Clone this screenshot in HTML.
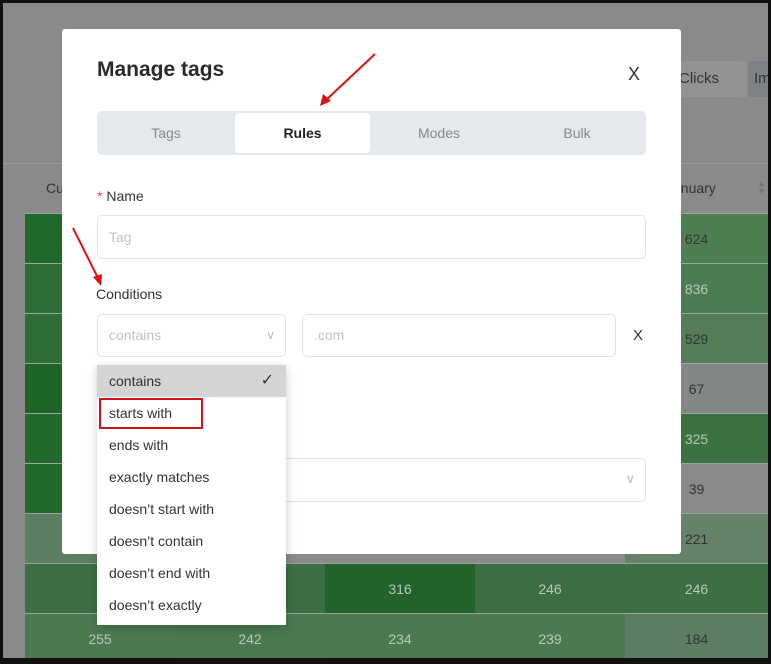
<!DOCTYPE html>
<html><head><style>
*{margin:0;padding:0;box-sizing:border-box}
body{width:771px;height:660px;overflow:hidden;background:#111;font-family:"Liberation Sans",sans-serif;position:relative}
.bg{position:absolute;left:3px;top:3px;right:3px;bottom:2px;background:#8a8a8a;overflow:hidden}
.a{position:absolute}
.cell{position:absolute;width:150px;height:50px;color:#b9c9bb;font-size:14px;text-align:center;line-height:50px;border-top:1px solid #9aa59b}
.modal{position:absolute;left:62px;top:29px;width:619px;height:525px;background:#fff;border-radius:3px}
.in{position:absolute;border:1px solid #e3e3e3;border-radius:5px;background:#fff;font-size:14px;color:#c2c2c2;padding-left:11px}
.dd{position:absolute;left:97px;top:365px;width:189px;height:260px;background:#fff;box-shadow:0 3px 10px rgba(0,0,0,.2)}
.it{height:32px;line-height:32px;padding-left:12px;font-size:14px;color:#333}
</style></head><body>
<div class="bg">
<div class="a" style="left:672px;top:58px;width:72px;height:36px;background:#939393;border-radius:4px;color:#333;font-size:15px;line-height:36px;padding-left:4px">Clicks</div>
<div class="a" style="left:745px;top:58px;width:30px;height:36px;background:#7e8286;color:#333;font-size:15px;line-height:36px;padding-left:6px">Im</div>
<div class="a" style="left:0;top:160px;width:771px;height:1px;background:#999"></div>
<div class="a" style="left:43px;top:177px;color:#333;font-size:14px">Cu</div>
<div class="a" style="left:670px;top:177px;color:#333;font-size:14px">anuary</div>
<div class="a" style="left:754px;top:176px;color:#777;font-size:9px;line-height:8px">▲<br>▼</div>
</div>
<div class="cell" style="left:25px;top:213px;background:#1f6a2a"></div>
<div class="cell" style="left:25px;top:263px;background:#2f6d38"></div>
<div class="cell" style="left:25px;top:313px;background:#2f6d38"></div>
<div class="cell" style="left:25px;top:363px;background:#1d6427"></div>
<div class="cell" style="left:25px;top:413px;background:#226a2c"></div>
<div class="cell" style="left:25px;top:463px;background:#226a2c"></div>
<div class="cell" style="left:25px;top:513px;background:#5d7f61"></div>
<div class="cell" style="left:25px;top:563px;background:#3c7044">2</div>
<div class="cell" style="left:175px;top:563px;background:#3c7044"></div>
<div class="cell" style="left:325px;top:563px;background:#22632b">316</div>
<div class="cell" style="left:475px;top:563px;background:#3c6d43">246</div>
<div class="cell" style="left:625px;top:563px;width:143px;background:#3d6f44">246</div>
<div class="cell" style="left:25px;top:613px;height:45px;background:#4b7a51">255</div>
<div class="cell" style="left:175px;top:613px;height:45px;background:#4a7950">242</div>
<div class="cell" style="left:325px;top:613px;height:45px;background:#4b7a51">234</div>
<div class="cell" style="left:475px;top:613px;height:45px;background:#4b7a51">239</div>
<div class="cell" style="left:625px;top:613px;height:45px;width:143px;background:#5e7e62;color:#333">184</div>
<div class="cell" style="left:625px;top:213px;width:143px;background:#4d7f53;color:#333">624</div>
<div class="cell" style="left:625px;top:263px;width:143px;background:#4a7d51">836</div>
<div class="cell" style="left:625px;top:313px;width:143px;background:#557d59;color:#333">529</div>
<div class="cell" style="left:625px;top:363px;width:143px;background:#848884;color:#333">67</div>
<div class="cell" style="left:625px;top:413px;width:143px;background:#3a7341">325</div>
<div class="cell" style="left:625px;top:463px;width:143px;background:#888a88;color:#333">39</div>
<div class="cell" style="left:625px;top:513px;width:143px;background:#66836a;color:#333">221</div>

<div class="modal"></div>
<div class="a" style="left:97px;top:58px;font-size:21px;font-weight:bold;color:#2a2a2a">Manage tags</div>
<div class="a" style="left:628px;top:64px;font-size:18px;color:#333">X</div>
<div class="a" style="left:97px;top:111px;width:549px;height:44px;background:#e5e8ec;border-radius:5px"></div>
<div class="a" style="left:235px;top:113px;width:135px;height:40px;background:#fff;border-radius:4px"></div>
<div class="a" style="left:97px;top:125px;width:138px;text-align:center;font-size:14px;color:#888">Tags</div>
<div class="a" style="left:235px;top:125px;width:135px;text-align:center;font-size:14px;color:#222;font-weight:bold">Rules</div>
<div class="a" style="left:370px;top:125px;width:138px;text-align:center;font-size:14px;color:#888">Modes</div>
<div class="a" style="left:508px;top:125px;width:138px;text-align:center;font-size:14px;color:#888">Bulk</div>
<div class="a" style="left:97px;top:188px;font-size:14px;color:#333"><span style="color:#e44">*</span> Name</div>
<div class="in" style="left:97px;top:215px;width:549px;height:44px;line-height:42px">Tag</div>
<div class="a" style="left:96px;top:286px;font-size:14px;color:#333">Conditions</div>
<div class="in" style="left:97px;top:314px;width:189px;height:43px;line-height:41px">contains<span style="position:absolute;right:10px;top:0;color:#bbb;font-size:12px">∨</span></div>
<div class="in" style="left:302px;top:314px;width:314px;height:43px;line-height:41px">.com</div>
<div class="a" style="left:633px;top:327px;font-size:15px;color:#333">X</div>
<div class="in" style="left:190px;top:458px;width:456px;height:44px"><span style="position:absolute;right:10px;top:12px;color:#bbb;font-size:13px">∨</span></div>
<div class="dd">
<div class="it" style="background:#d4d4d4;position:relative">contains<span style="position:absolute;right:12px;top:0;font-size:16px">✓</span></div>
<div class="it">starts with</div>
<div class="it">ends with</div>
<div class="it">exactly matches</div>
<div class="it">doesn’t start with</div>
<div class="it">doesn’t contain</div>
<div class="it">doesn’t end with</div>
<div class="it">doesn’t exactly</div>
</div>
<div class="a" style="left:99px;top:398px;width:104px;height:31px;border:2px solid #d0101a"></div>
<svg class="a" style="left:0;top:0" width="771" height="660">
<line x1="375" y1="54" x2="326" y2="100" stroke="#e01010" stroke-width="2"/>
<polygon points="320,106 323,94 331,101" fill="#e01010"/>
<line x1="73" y1="228" x2="98" y2="278" stroke="#e01010" stroke-width="2"/>
<polygon points="101,286 93,277 102,274" fill="#e01010"/>
</svg>
</body></html>
